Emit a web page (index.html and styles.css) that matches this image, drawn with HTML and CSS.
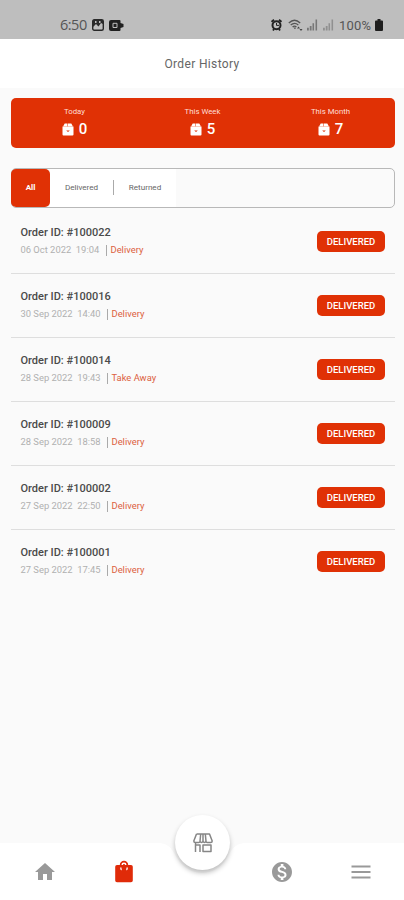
FILE: index.html
```html
<!DOCTYPE html>
<html lang="en">
<head>
<meta charset="utf-8">
<meta name="viewport" content="width=device-width, initial-scale=1">
<title>Order History</title>
<link rel="stylesheet" href="styles.css">
</head>
<body>
<svg class="defs" aria-hidden="true">
  <symbol id="box" viewBox="0 0 12 13"><path fill="currentColor" d="M2.700.5h2.800v2.800H1.200zM6 .5h3.300l1.500 2.800H6zM.5 3.600h11v7.900q0 1-1 1h-9q-1 0-1-1z"/><path fill="#e03105" d="M4.200 7.500h3.600L6 9z"/></symbol>
  <symbol id="signal" viewBox="0 0 12 12"><path fill="currentColor" d="M0 9h2v3H0zM3 7h2v5H3zM6 4h1.700v8H6zM9.300 0H11v12H9.300z"/></symbol>
</svg>
<div class="screen">
  <div class="status">
    <div class="status-left">
      <span class="time">6:50</span>
      <svg width="12" height="12" viewBox="0 0 12 12"><rect x=".7" y=".7" width="10.600" height="10.600" rx="1.500" fill="none" stroke="#292929" stroke-width="1.400"/><path fill="#292929" d="M1 1h10v4L9 4 6.500 7.500 4 5 1 8z"/><path fill="#bebebe" d="M3 2h1.500v2H3zM7 2h1.500v2H7z"/></svg>
      <svg width="15" height="11" viewBox="0 0 15 11"><path fill="#202020" d="M2 0h8.500q1 0 1 1v2l3 1v3l-3 1v2q0 1-1 1H2Q0 11 0 9V2Q0 0 2 0z"/><path fill="none" stroke="#bebebe" d="M4 3.300h4v4.200H4z"/></svg>
    </div>
    <div class="status-right">
      <svg width="11" height="12" viewBox="0 0 11 12"><path stroke="#222" stroke-width="1.800" d="M.5 2.800 3 .7M8 .7l2.500 2.100M2 11.500 3 10M9 11.500 8 10"/><circle cx="5.500" cy="6.200" r="4" fill="none" stroke="#222" stroke-width="2"/><path d="M5.500 4v2.400H8" fill="none" stroke="#222"/></svg>
      <svg class="wifi" width="15" height="13" viewBox="0 0 15 13"><path fill="none" stroke="#555" stroke-width="1.300" d="M.8 4Q6.500-1.600 12.200 4M2.700 6.100Q6.500 2.600 10.300 6M4.600 8Q6.500 6.200 8.400 8"/><path fill="#444" d="M5.500 8.500 7 10.200l1-1.500zM9 9.500l1.500-2L12 9.500zM11.500 10h3L13 12z"/></svg>
      <svg class="sig" width="11" height="12"><use href="#signal"/></svg>
      <svg class="sig faint" width="11" height="12"><use href="#signal"/></svg>
      <span class="charge">100%</span>
      <svg class="battery" width="8" height="12" viewBox="0 0 8 12"><path fill="#1e1e1e" d="M2.500 0h3v1.500H7q1 0 1 1V11q0 1-1 1H1q-1 0-1-1V2.500q0-1 1-1h1.500z"/></svg>
    </div>
  </div>
  <header class="title">Order History</header>
  <main>
    <section class="stats">
      <div class="stat"><span class="label">Today</span><div class="count"><svg width="12" height="13"><use href="#box"/></svg><span>0</span></div></div>
      <div class="stat"><span class="label">This Week</span><div class="count"><svg width="12" height="13"><use href="#box"/></svg><span>5</span></div></div>
      <div class="stat"><span class="label">This Month</span><div class="count"><svg width="12" height="13"><use href="#box"/></svg><span>7</span></div></div>
    </section>
    <nav class="tabs">
      <div class="tab active">All</div>
      <div class="tab delivered">Delivered</div>
      <div class="split"></div>
      <div class="tab returned">Returned</div>
    </nav>
    <section class="orders">
      <article class="order"><div><h2>Order ID: #100022</h2><p><span class="date first">06 Oct 2022&nbsp; 19:04</span><i></i><b>Delivery</b></p></div><span class="badge">DELIVERED</span></article>
      <article class="order"><div><h2>Order ID: #100016</h2><p><span class="date">30 Sep 2022&nbsp; 14:40</span><i></i><b>Delivery</b></p></div><span class="badge">DELIVERED</span></article>
      <article class="order"><div><h2>Order ID: #100014</h2><p><span class="date">28 Sep 2022&nbsp; 19:43</span><i></i><b>Take Away</b></p></div><span class="badge">DELIVERED</span></article>
      <article class="order"><div><h2>Order ID: #100009</h2><p><span class="date">28 Sep 2022&nbsp; 18:58</span><i></i><b>Delivery</b></p></div><span class="badge">DELIVERED</span></article>
      <article class="order"><div><h2>Order ID: #100002</h2><p><span class="date">27 Sep 2022&nbsp; 22:50</span><i></i><b>Delivery</b></p></div><span class="badge">DELIVERED</span></article>
      <article class="order"><div><h2>Order ID: #100001</h2><p><span class="date">27 Sep 2022&nbsp; 17:45</span><i></i><b>Delivery</b></p></div><span class="badge">DELIVERED</span></article>
    </section>
  </main>
  <footer class="bottom">
    <svg class="bar" width="404" height="57" viewBox="0 0 404 57"><path fill="#fff" d="M0 0h157c13 0 15 7 20 15 12 20 38 20 50 0 5-8 7-15 20-15h157v57H0z"/></svg>
    <div class="nav">
      <svg width="24" height="24" viewBox="0 0 24 24"><path fill="#999" d="M10 20v-6h4v6h5v-8h3L12 3 2 12h3v8z"/></svg>
      <svg width="24" height="24" viewBox="0 0 24 24"><path fill="#e02b09" d="M5 5h2.800a4.200 4.200 0 0 1 8.400 0H19q1.800 0 1.800 1.800v13.600q0 1.800-1.800 1.800H5q-1.800 0-1.800-1.800V6.800Q3.200 5 5 5z"/><path fill="none" stroke="#fff" stroke-width="1.400" d="M10.200 5a1.800 1.800 0 0 1 3.600 0M8.800 7.500q0 2 .8 2.400M15.200 7.500q0 2-.8 2.400"/></svg>
      <span></span>
      <svg width="24" height="24" viewBox="0 0 24 24"><path fill="#999" d="M12 2C6.480 2 2 6.480 2 12s4.480 10 10 10 10-4.480 10-10S17.520 2 12 2zm1.410 16.090V20h-2.670v-1.930c-1.710-.36-3.160-1.460-3.270-3.400h1.960c.1 1.050.82 1.870 2.650 1.870 1.960 0 2.400-.98 2.400-1.590 0-.83-.44-1.610-2.670-2.140-2.480-.6-4.180-1.620-4.180-3.670 0-1.720 1.390-2.840 3.110-3.210V4h2.670v1.950c1.860.45 2.790 1.860 2.850 3.390H14.300c-.05-1.110-.64-1.870-2.220-1.870-1.500 0-2.400.68-2.400 1.640 0 .84.650 1.390 2.670 1.910s4.180 1.390 4.180 3.910c-.01 1.830-1.380 2.830-3.120 3.160z"/></svg>
      <svg width="24" height="24" viewBox="0 0 24 24"><path stroke="#999" stroke-width="2" d="M2.500 6.500h19M2.500 12h19M2.500 17.500h19"/></svg>
    </div>
    <div class="fab"><svg width="22" height="22" viewBox="0 0 22 22"><path fill="none" stroke="#868686" stroke-width="1.500" stroke-linejoin="round" d="M4.500 2h13l2.700 7q0 1.500-1.500 1.500h-3.400q-1.300 0-1.300-1.300L13.300 2M8.700 2 8 9.200q0 1.300-1.300 1.300H3.300Q1.800 10.500 1.800 9L4.500 2M8 8.800q0 1.700 1.500 1.700T11 8.800q0 1.700 1.500 1.700T14 8.800M11 2v7M3.500 10.500V20M8 20v-7M11 13h8v6.500h-8zM3.500 13h5"/></svg></div>
  </footer>
</div>
</body>
</html>
```
FILE: styles.css
```css
* { box-sizing: border-box; }
body { margin: 0; font-family: Roboto, sans-serif; background: #fafafa; color: #333; }
.defs { position: absolute; width: 0; height: 0; }
.screen { width: 404px; height: 900px; display: flex; flex-direction: column; overflow: hidden; background: #fafafa; }
.status { height: 39px; flex: none; background: #bebebe; display: flex; justify-content: space-between; padding: 12px 21px 0 60px; color: #555; }
.status-left, .status-right { display: flex; align-items: center; height: 26px; }
.time { font: 14.500px/20px "Open Sans", sans-serif; width: 27px; letter-spacing: -.5px; margin-right: 5px; }
.status-left svg + svg { margin-left: 5px; }
.wifi { margin-left: 6px; }
.sig { color: #777; margin-left: 4px; }
.sig + .sig { margin-left: 5px; }
.faint { color: #909090; }
.charge { font-size: 13px; letter-spacing: .2px; margin-left: 5px; width: 33px; }
.battery { margin-left: 3px; }
.title { height: 49px; flex: none; background: #fff; text-align: center; font-size: 12px; line-height: 50px; letter-spacing: .35px; color: #666; }
main { padding: 10px 9px 0 11px; flex: 1; }
.stats { height: 50px; border-radius: 5px; background: #e03105; color: #fff; display: grid; grid-template-columns: repeat(3, 1fr); }
.stat { display: flex; flex-direction: column; align-items: center; padding: 9px 1px 0 0; }
.label { font-size: 7.800px; line-height: 10px; color: #ffded5; font-weight: 400; }
.count { display: flex; align-items: center; gap: 5px; margin-top: 4px; font-size: 15px; line-height: 17px; font-weight: 500; }
.tabs { height: 40px; margin-top: 20px; border: 1px solid #b8b8b8; border-radius: 5px; display: flex; align-items: center; }
.tab { height: 38px; line-height: 37px; font-size: 8.100px; background: #fff; color: #666; text-align: center; }
.active { width: 39px; margin-left: -1px; background: #e03105; color: #fff; border-radius: 5px; font-weight: 700; }
.delivered { width: 63px; }
.split { height: 38px; width: 1px; background: linear-gradient(#fff 0 11px, #aaa 11px 26px, #fff 26px); }
.returned { width: 62px; }
.orders { margin-top: 2px; }
.order { height: 64px; border-bottom: 1px solid #dedede; display: flex; justify-content: space-between; padding: 16px 10px 0 9.500px; }
.order:last-child { border: 0; }
h2 { font-size: 11px; line-height: 14px; font-weight: 500; margin: 0; color: #4a4a4a; }
p { display: flex; align-items: center; margin: 5px 0 0; height: 10px; font-size: 9.400px; line-height: 10px; }
.date { width: 82px; color: #b0b0b0; white-space: nowrap; }
.date.first { width: 81px; }
i { width: 1px; height: 11px; background: #aaa; margin: 0 4px; flex: none; }
b { color: #dc6040; font-weight: 400; white-space: nowrap; }
.badge { width: 68px; height: 21px; margin-top: 5px; border-radius: 5px; background: #e03105; color: #fff; text-align: center; font-size: 9.500px; line-height: 21px; font-weight: 500; }
.bottom { height: 57px; flex: none; position: relative; }
.bar { position: absolute; top: 0; left: 0; }
.nav { position: relative; height: 57px; display: grid; grid-template-columns: repeat(5, 79px); justify-content: center; justify-items: center; align-items: center; padding-left: 1px; }
.fab { position: absolute; left: 175px; top: -28px; width: 55px; height: 55px; border-radius: 50%; background: #fff; box-shadow: 0 3px 5px rgba(0,0,0,.25); display: grid; place-items: center; }
```
